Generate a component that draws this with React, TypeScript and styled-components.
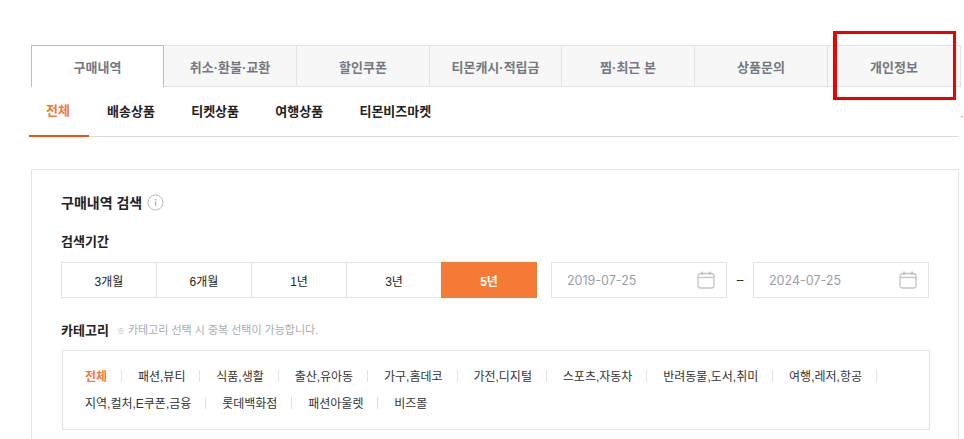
import React from "react";
import styled, { createGlobalStyle } from "styled-components";

const Global = createGlobalStyle`
  html, body { margin: 0; padding: 0; background: #fff; overflow: hidden; }
  body { font-family: "Liberation Sans", "Noto Sans CJK KR", sans-serif; color: #222; }
  * { box-sizing: border-box; }
`;
const Page = styled.div`
  position: relative;
  width: 964px;
  height: 439px;
  overflow: hidden;
  padding: 45px 0 0 29px;
`;
const Tabs = styled.ul`
  display: flex;
  list-style: none;
  margin: 0 0 0 2px;
  padding: 0;
  width: 931px;
  height: 42px;
`;
const Tab = styled.li<{ $active?: boolean }>`
  flex: 0 0 134px;
  height: 42px;
  display: flex;
  align-items: center;
  justify-content: center;
  font-size: 13px;
  font-weight: 700;
  color: #75797f;
  margin-left: ${(p) => (p.$active ? "0" : "-1px")};
  background: ${(p) => (p.$active ? "#fff" : "#f7f7f8")};
  border: 1px solid ${(p) => (p.$active ? "#b9bdc9" : "#e0e2e8")};
  border-bottom: ${(p) => (p.$active ? "none" : "1px solid #e0e2e8")};
  position: relative;
  z-index: ${(p) => (p.$active ? 1 : 0)};
  &:first-child, &:nth-child(4) { flex-basis: 133px; }
`;
const SubNav = styled.nav`
  display: flex;
  width: 930px;
  height: 50px;
  border-bottom: 1px solid #dcdcdf;
`;
const SubItem = styled.a<{ $active?: boolean }>`
  height: 50px;
  padding: ${(p) => (p.$active ? "0 19px 3px 17px" : "0 18.15px 3px")};
  display: flex;
  align-items: center;
  justify-content: center;
  font-size: 13px;
  font-weight: 700;
  color: ${(p) => (p.$active ? "#f4793b" : "#222")};
  border-bottom: ${(p) => (p.$active ? "2px solid #f2500f" : "none")};
`;
const Card = styled.section`
  width: 928px;
  margin: 32px 0 0 2px;
  height: 300px;
  border: 1px solid #e3e4e7;
  padding: 20px 29px 0 29px;
`;
const Heading = styled.h2`
  display: flex;
  align-items: center;
  gap: 5px;
  margin: 0;
  height: 24px;
  font-size: 14px;
  font-weight: 700;
  color: #222;
`;
const Label = styled.h3`
  margin: 18px 0 0;
  height: 20px;
  line-height: 20px;
  font-size: 13px;
  font-weight: 700;
  color: #222;
`;
const PeriodRow = styled.div`
  display: flex;
  align-items: center;
  margin-top: 10px;
  height: 36px;
`;
const Periods = styled.div`
  display: flex;
  width: 477px;
  height: 36px;
  border: 1px solid #e0e2e6;
  border-right: none;
`;
const Period = styled.button<{ $active?: boolean }>`
  flex: ${(p) => (p.$active ? "1 1 0" : "0 0 95px")};
  margin: ${(p) => (p.$active ? "-1px 0 -1px -1px" : "0")};
  border: none;
  border-right: ${(p) => (p.$active ? "none" : "1px solid #e0e2e6")};
  padding: 0;
  font-family: inherit;
  font-size: 12px;
  font-weight: ${(p) => (p.$active ? 700 : 400)};
  color: ${(p) => (p.$active ? "#fff" : "#222")};
  background: ${(p) => (p.$active ? "#f47a36" : "#fff")};
`;
const DateBox = styled.div`
  display: flex;
  align-items: center;
  justify-content: space-between;
  width: 176px;
  height: 36px;
  border: 1px solid #e0e2e6;
  padding: 0 11px 0 15px;
  font-family: "Inter", "Liberation Sans", sans-serif;
  font-size: 12.5px;
  color: #9a9ea6;
`;
const DateDash = styled.span`
  width: 26px;
  text-align: center;
  font-size: 12px;
  color: #222;
`;
const DateStart = styled.div`
  margin-left: 14px;
  display: flex;
  align-items: center;
`;
const CategoryHead = styled.div`
  display: flex;
  align-items: center;
  gap: 8px;
  margin-top: 21px;
  height: 20px;
`;
const CategoryTitle = styled.h3`
  margin: 0;
  font-size: 13px;
  font-weight: 700;
  color: #222;
`;
const Note = styled.p`
  margin: 0;
  font-size: 11px;
  color: #a9abb0;
`;
const NoteMark = styled.span`
  font-size: 8px;
`;
const CategoryBox = styled.div`
  display: flex;
  flex-wrap: wrap;
  align-content: flex-start;
  width: 868px;
  height: 80px;
  margin: 11px 0 0 1px;
  padding: 11px 20px 0 22px;
  border: 1px solid #e3e4e7;
`;
const Category = styled.a<{ $active?: boolean }>`
  display: flex;
  align-items: center;
  height: 27px;
  font-size: 12px;
  font-weight: ${(p) => (p.$active ? 700 : 400)};
  color: ${(p) => (p.$active ? "#f4793b" : "#333")};
  &:not(:last-child)::after {
    content: "";
    width: 1px;
    height: 12px;
    background: #dfe0e4;
    margin: 0 15.85px 0 14px;
  }
`;
const RedMark = styled.div`
  position: absolute;
  left: 833px;
  top: 31px;
  width: 123px;
  height: 69px;
  border: 3px solid #f00000;
  border-left-width: 4px;
`;
const Speck = styled.i`
  position: absolute;
  left: 961px;
  top: 116px;
  width: 2px;
  height: 1px;
  background: #e8926a;
`;

const InfoIcon = () => (
  <svg width="17" height="17" viewBox="0 0 17 17" fill="none">
    <circle cx="8.5" cy="8.5" r="7.5" stroke="#b5b8bf" />
    <rect x="8" y="7.5" width="1.2" height="4.5" fill="#a9acb2" />
    <rect x="8" y="5" width="1.2" height="1.3" fill="#a9acb2" />
  </svg>
);
const CalendarIcon = () => (
  <svg width="18" height="18" viewBox="0 0 18 18" fill="none">
    <rect x="1" y="2.5" width="16" height="14.5" rx="2.5" stroke="#c1c4c9" strokeWidth="1.3" />
    <path d="M1 6.5H17" stroke="#c1c4c9" strokeWidth="1.3" />
    <path d="M5 0.5V4M13 0.5V4" stroke="#a6a9af" strokeWidth="1" />
  </svg>
);

const tabs = ["구매내역", "취소·환불·교환", "할인쿠폰", "티몬캐시·적립금", "찜·최근 본", "상품문의", "개인정보"];
const subs = ["전체", "배송상품", "티켓상품", "여행상품", "티몬비즈마켓"];
const periods = ["3개월", "6개월", "1년", "3년", "5년"];
const cats = ["전체", "패션,뷰티", "식품,생활", "출산,유아동", "가구,홈데코", "가전,디지털", "스포츠,자동차", "반려동물,도서,취미", "여행,레저,항공", "지역,컬처,E쿠폰,금융", "롯데백화점", "패션아울렛", "비즈몰"];

export default function App() {
  return (
    <Page>
      <Global />
      <Tabs>
        {tabs.map((t, i) => <Tab key={t} $active={i === 0}>{t}</Tab>)}
      </Tabs>
      <SubNav>
        {subs.map((s, i) => <SubItem key={s} $active={i === 0}>{s}</SubItem>)}
      </SubNav>
      <Card>
        <Heading>구매내역 검색 <InfoIcon /></Heading>
        <Label>검색기간</Label>
        <PeriodRow>
          <Periods>
            {periods.map((p, i) => <Period key={p} $active={i === 4}>{p}</Period>)}
          </Periods>
          <DateStart>
            <DateBox>2019-07-25<CalendarIcon /></DateBox>
            <DateDash>–</DateDash>
            <DateBox>2024-07-25<CalendarIcon /></DateBox>
          </DateStart>
        </PeriodRow>
        <CategoryHead>
          <CategoryTitle>카테고리</CategoryTitle>
          <Note><NoteMark>※</NoteMark> 카테고리 선택 시 중복 선택이 가능합니다.</Note>
        </CategoryHead>
        <CategoryBox>
          {cats.map((c, i) => <Category key={c} $active={i === 0}>{c}</Category>)}
        </CategoryBox>
      </Card>
      <RedMark />
      <Speck />
    </Page>
  );
}
